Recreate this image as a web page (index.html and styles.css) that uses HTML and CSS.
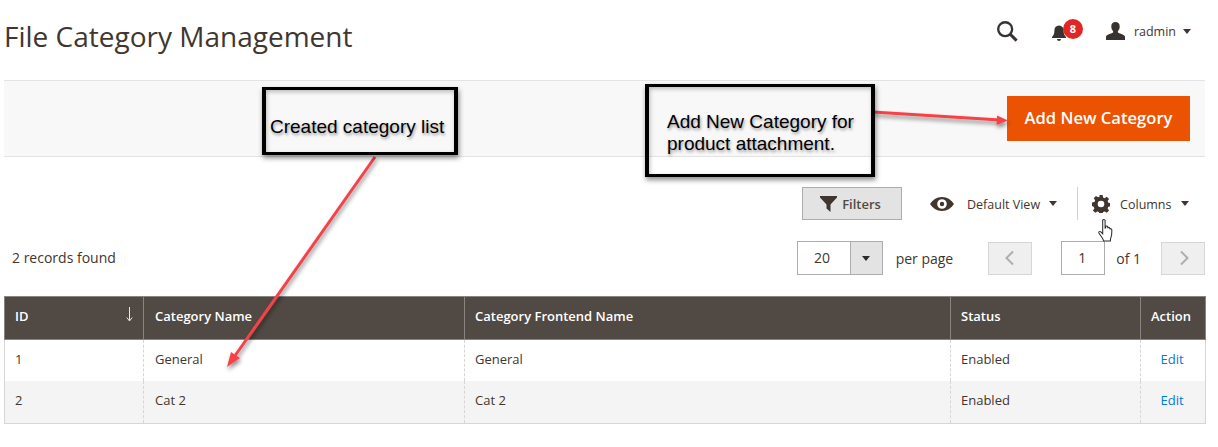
FILE: index.html
```html
<!DOCTYPE html>
<html lang="en">
<head>
<meta charset="utf-8">
<title>File Category Management</title>
<link rel="stylesheet" href="styles.css">
</head>
<body>
<div class="page">
  <header class="header">
    <h1 class="title">File Category Management</h1>
    <div class="header-tools">
      <svg class="ic-search" width="22" height="22" viewBox="0 0 24 24"><circle cx="10" cy="10" r="7.6" fill="none" stroke="#373330" stroke-width="2.6"/><path d="M15.400 15.400L22.500 22.500" stroke="#373330" stroke-width="3.2" fill="none"/></svg>
      <div class="bell">
        <svg width="18" height="18" viewBox="0 0 18 18"><path d="M8 1.500c-3 0-4.600 2.200-4.600 5 0 3.400-.9 5-2.400 6.600v.9h14v-.9c-1.500-1.600-2.400-3.200-2.400-6.600 0-2.800-1.600-5-4.600-5zM6 15h4c0 1.200-.9 2-2 2s-2-.8-2-2z" fill="#373330"/></svg>
        <span class="badge">8</span>
      </div>
      <div class="user">
        <svg width="21" height="20" viewBox="0 0 21 20"><path d="M10.500 1c-2.800 0-4.200 1.800-4.200 4.400 0 1.900.8 3.600 1.800 4.700v1.500c-2.500 1.200-6.300 2.200-7.100 4V19h19v-3.400c-.8-1.800-4.600-2.800-7.100-4v-1.500c1-1.100 1.800-2.800 1.800-4.700C14.700 2.800 13.300 1 10.500 1z" fill="#373330"/></svg>
        <span class="user-name">radmin</span>
        <span class="caret caret-user"></span>
      </div>
    </div>
  </header>

  <section class="action-bar">
    <button class="btn-primary" type="button">Add New Category</button>
  </section>

  <section class="toolbar">
    <div class="toolbar-top">
      <button class="btn-filters" type="button">
        <svg width="17" height="16" viewBox="0 0 17 16"><path d="M0 0h17v1.500L10.500 8.500V16L6.500 12.500V8.500L0 1.500z" fill="#41362f"/></svg>
        Filters
      </button>
      <div class="view-switch">
        <svg width="24" height="14" viewBox="0 0 24 14"><path fill-rule="evenodd" d="M12 0C6.500 0 2.500 3.300 0 7c2.500 3.700 6.500 7 12 7s9.500-3.300 12-7c-2.500-3.700-6.500-7-12-7zm0 2.200a4.800 4.800 0 1 1 0 9.600 4.800 4.800 0 0 1 0-9.600zm0 2.600a2.200 2.200 0 1 0 0 4.400 2.200 2.200 0 0 0 0-4.400z" fill="#41362f"/></svg>
        <span class="view-label">Default View</span>
        <span class="caret"></span>
      </div>
      <div class="columns-switch">
        <svg width="18" height="18" viewBox="0 0 19 19"><path fill-rule="evenodd" d="M7.800 0h3.400l.5 2.600 1.700.7 2.200-1.500 2.400 2.400-1.500 2.200.7 1.700 2.600.5v3.400l-2.600.5-.7 1.700 1.500 2.200-2.400 2.400-2.200-1.500-1.700.7-.5 2.600H7.800l-.5-2.600-1.700-.7-2.200 1.500L1 16.400l1.500-2.200-.7-1.700L0 11.700V7.800l2.600-.5.7-1.700-1.500-2.200 2.400-2.400 2.200 1.500 1.700-.7zM9.500 6a3.500 3.500 0 1 0 0 7 3.500 3.500 0 0 0 0-7z" fill="#41362f"/></svg>
        <span class="view-label">Columns</span>
        <span class="caret"></span>
      </div>
    </div>
    <div class="toolbar-bottom">
      <span class="records">2 records found</span>
      <div class="pager">
        <div class="page-size"><span class="size-value">20</span><span class="size-toggle"><span class="caret"></span></span></div>
        <span class="per-page">per page</span>
        <span class="page-btn page-prev"><svg width="11" height="16" viewBox="0 0 11 16"><path d="M9 1.500L2.500 8 9 14.500" fill="none" stroke="#b3adaa" stroke-width="2"/></svg></span>
        <span class="page-input">1</span>
        <span class="page-of">of 1</span>
        <span class="page-btn page-next"><svg width="11" height="16" viewBox="0 0 11 16"><path d="M2 1.500L8.500 8 2 14.500" fill="none" stroke="#b3adaa" stroke-width="2"/></svg></span>
      </div>
    </div>
  </section>

  <table class="grid">
    <colgroup><col class="c-id"><col class="c-name"><col class="c-front"><col class="c-status"><col class="c-action"></colgroup>
    <thead>
      <tr>
        <th><span class="th-id">ID<svg class="sort" width="7" height="15" viewBox="0 0 7 15"><path d="M3.500 0V13.500M.8 10.500L3.500 14 6.200 10.500" fill="none" stroke="#e4e2f5" stroke-width="1"/></svg></span></th>
        <th>Category Name</th>
        <th>Category Frontend Name</th>
        <th>Status</th>
        <th>Action</th>
      </tr>
    </thead>
    <tbody>
      <tr>
        <td>1</td><td>General</td><td>General</td><td>Enabled</td><td class="action"><a href="#">Edit</a></td>
      </tr>
      <tr class="alt">
        <td>2</td><td>Cat 2</td><td>Cat 2</td><td>Enabled</td><td class="action"><a href="#">Edit</a></td>
      </tr>
    </tbody>
  </table>

  <svg class="arrows" width="1218" height="447" viewBox="0 0 1218 447">
    <defs>
      <filter id="arrow-shadow" x="-20%" y="-20%" width="140%" height="140%"><feDropShadow dx="1" dy="3" stdDeviation="2" flood-color="#000" flood-opacity=".45"/></filter>
    </defs>
    <g filter="url(#arrow-shadow)">
      <path d="M375 157L232 360" stroke="#f5434a" stroke-width="3" fill="none"/>
      <path d="M227 367L231 352 240 358z" fill="#f5434a"/>
      <path d="M873 112L1000 120" stroke="#f5434a" stroke-width="3" fill="none"/>
      <path d="M1008 120.500L997 115.500 996.500 125z" fill="#f5434a"/>
    </g>
  </svg>
  <div class="note note-list">Created category list</div>
  <div class="note note-add">Add New Category for<br>product attachment.</div>
  <svg class="cursor" width="19" height="26" viewBox="0 0 20 26"><path d="M6 2c0-1.500 2.500-1.500 2.500 0v8l.6-.2V8.500c0-1 2-1 2.200 0v1.600c.2-1 2.100-1 2.200.1v1c.3-.9 2-.8 2.100.4 0 3 .2 6-1 8.400-.4.900-.5 2-.5 3.500H7c-.4-2.500-3-5-5-8.500-.6-1.300 1-2 2-1l2 2z" fill="#fff" stroke="#2b2b2b" stroke-width="1.100"/></svg>
</div>
</body>
</html>
```

FILE: styles.css
```css
* { box-sizing: border-box; }
html, body { margin: 0; padding: 0; background: #fff; }
body {
  font-family: "Open Sans", sans-serif;
  font-size: 13px;
  color: #41362f;
  width: 1218px;
  height: 447px;
  overflow: hidden;
}
.page { position: relative; width: 1218px; height: 447px; padding-left: 4px; padding-right: 13px; }

.header { height: 80px; display: flex; align-items: flex-start; justify-content: space-between; }
.title { margin: 16px 0 0; font-size: 28px; font-weight: 400; line-height: 40px; color: #41362f; }
.header-tools { display: flex; align-items: center; height: 20px; margin-top: 21px; margin-right: 14px; }
.ic-search { margin-right: 33px; }
.bell { position: relative; width: 18px; height: 18px; margin-top: 3px; margin-right: 36px; }
.bell svg { display: block; }
.badge {
  position: absolute; left: 12px; top: -5px; width: 20px; height: 20px; border-radius: 50%;
  background: #e22626; color: #fff; font-size: 11px; font-weight: 700; line-height: 20px; text-align: center;
}
.user { display: flex; align-items: center; }
.user-name { margin-left: 8px; font-size: 12.500px; color: #41362f; }
.caret { display: inline-block; width: 0; height: 0; border-style: solid; border-width: 5px 4px 0; border-color: #41362f transparent transparent; }
.caret-user { margin-left: 7px; }

.action-bar {
  height: 77px; background: #f8f8f8; border-top: 1px solid #e3e3e3; border-bottom: 1px solid #e3e3e3;
  display: flex; align-items: flex-start; justify-content: flex-end; padding: 15px 15px 0 0;
}
.btn-primary {
  width: 183px; height: 45px; border: 0; background: #eb5202; color: #fff;
  font: 600 16.600px "Open Sans", sans-serif; padding: 0 0 2px;
}

.toolbar { display: flex; flex-direction: column; }
.toolbar-top { display: flex; align-items: center; height: 33px; margin-top: 30px; padding-left: 798px; }
.btn-filters {
  width: 100px; height: 33px; background: #e3e3e3; border: 1px solid #adadad; color: #514943;
  font: 600 13px "Open Sans", sans-serif; display: flex; align-items: center; justify-content: center; gap: 5px; padding: 0 3px 0 0;
}
.view-switch { display: flex; align-items: center; margin-left: 28px; margin-right: -1px; padding-right: 20px; height: 33px; border-right: 1px solid #d1d1d1; }
.view-label { font-size: 12.500px; color: #41362f; padding-top: 1px; }
.view-switch .view-label { margin-left: 13px; }
.view-switch .caret { margin-left: 9px; }
.columns-switch { display: flex; align-items: center; margin-left: 15px; }
.columns-switch .view-label { margin-left: 10px; }
.columns-switch .caret { margin-left: 9px; }

.toolbar-bottom { display: flex; align-items: center; justify-content: space-between; height: 34px; margin-top: 21px; padding-left: 8px; }
.records { font-size: 14px; color: #41362f; margin-top: -1px; }
.pager { display: flex; align-items: center; font-size: 14px; color: #41362f; }
.page-size { display: flex; width: 86px; height: 34px; border: 1px solid #adadad; }
.size-value { flex: 1; text-align: center; line-height: 32px; padding-right: 3px; }
.size-toggle { width: 32px; background: #e3e3e3; border-left: 1px solid #adadad; display: flex; align-items: center; justify-content: center; }
.size-toggle .caret { border-color: #2b2b2b transparent transparent; }
.per-page { margin-left: 13px; margin-right: 35px; }
.page-btn { width: 44px; height: 33px; background: #efefef; border: 1px solid #d6d6d6; display: flex; align-items: center; justify-content: center; }
.page-prev { padding-right: 2px; }
.page-next { padding-left: 2px; }
.page-input { width: 44px; height: 34px; margin-left: 29px; border: 1px solid #adadad; padding-right: 2px; text-align: center; line-height: 32px; }
.page-of { margin-left: 11px; margin-right: 20px; }

.grid { width: 1201px; margin-top: 21px; border-collapse: collapse; table-layout: fixed; font-size: 13px; }
.c-id { width: 139px; } .c-name { width: 321px; } .c-front { width: 486px; } .c-status { width: 190px; } .c-action { width: 65px; }
.grid th {
  height: 43px; background: #514943; color: #fff; font-weight: 600; text-align: left; padding: 0 10px 5px;
  border: 1px solid #8a837f; font-size: 13px;
}
.grid th:nth-child(2), .grid td:nth-child(2) { padding-left: 11px; }
.th-id { display: flex; justify-content: space-between; align-items: center; }
.sort { display: block; margin-top: -2px; }
.grid td {
  height: 41px; padding: 0 10px 2px; border-left: 1px dashed #d6d6d6; border-right: 1px dashed #d6d6d6; color: #41362f;
}
.grid tr td:first-child { border-left: 1px solid #d6d6d6; }
.grid tr td:last-child { border-right: 1px solid #d6d6d6; }
.grid tr.alt td { background: #f4f4f4; height: 43px; padding-bottom: 4px; border-bottom: 1px solid #d6d6d6; }
.grid td.action { text-align: center; padding-left: 9px; padding-right: 11px; }
.action a { color: #007bdb; text-decoration: none; }

.arrows { position: absolute; left: 0; top: 0; pointer-events: none; }
.note {
  position: absolute; border-style: solid; border-color: #000; border-width: 3px 4px; font-family: "Liberation Sans", Arial, sans-serif; font-size: 19px;
  line-height: 22px; color: #000; box-shadow: 1px 3px 5px rgba(0,0,0,.45), inset 1px 2px 4px rgba(0,0,0,.25);
  text-shadow: 1px 2px 3px rgba(0,0,0,.4);
}
.note-list { left: 262px; top: 87px; width: 196px; height: 68px; padding: 26px 0 0 4px; white-space: nowrap; }
.note-add { left: 645px; top: 84px; width: 230px; height: 93px; padding: 24px 0 0 18px; white-space: nowrap; }
.cursor { position: absolute; left: 1097px; top: 218px; }
```
